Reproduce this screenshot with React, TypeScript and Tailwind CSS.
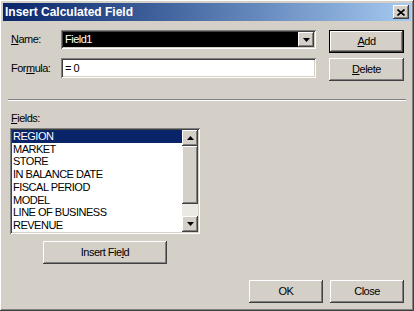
import React from "react";

const raised =
  "shadow-[inset_-1px_-1px_#404040,inset_1px_1px_#ffffff,inset_-2px_-2px_#808080,inset_2px_2px_#d4d0c8]";
const sunken =
  "shadow-[inset_1px_1px_#808080,inset_-1px_-1px_#ffffff,inset_2px_2px_#404040,inset_-2px_-2px_#d4d0c8]";

function Btn({
  children,
  w,
  def = false,
}: {
  children: React.ReactNode;
  w: string;
  def?: boolean;
}) {
  if (def) {
    return (
      <div className={`${w} h-[23px] border border-black bg-[#d4d0c8] flex`}>
        <div className={`flex-1 flex items-center justify-center ${raised}`}>
          {children}
        </div>
      </div>
    );
  }
  return (
    <div className={`${w} h-[23px] bg-[#d4d0c8] flex items-center justify-center ${raised}`}>
      {children}
    </div>
  );
}

function Arrow({ up }: { up?: boolean }) {
  return (
    <svg width="7" height="4" viewBox="0 0 7 4">
      {up ? (
        <polygon points="3.5,0 7,4 0,4" fill="#000" />
      ) : (
        <polygon points="0,0 7,0 3.5,4" fill="#000" />
      )}
    </svg>
  );
}

const fields = [
  "REGION",
  "MARKET",
  "STORE",
  "IN BALANCE DATE",
  "FISCAL PERIOD",
  "MODEL",
  "LINE OF BUSINESS",
  "REVENUE",
];

export default function App() {
  return (
    <div
      className="w-[414px] h-[311px] bg-[#d4d0c8] p-[3px] flex flex-col text-[11px] tracking-[-0.5px] text-black shadow-[inset_-1px_-1px_#404040,inset_1px_1px_#ffffff,inset_-2px_-2px_#808080]"
      style={{ fontFamily: '"Liberation Sans", Arial, sans-serif' }}
    >
      {/* Title bar */}
      <div className="h-[18px] flex items-center justify-between bg-gradient-to-r from-[#0a246a] to-[#a6caf0] pl-[2px] pr-[2px]">
        <span className="text-white font-bold text-[12px] tracking-normal leading-none">
          Insert Calculated Field
        </span>
        <div className={`w-[16px] h-[14px] bg-[#d4d0c8] flex items-center justify-center ${raised}`}>
          <svg width="8" height="7" viewBox="0 0 8 7">
            <path d="M0.5 0.5 L7.5 6.5 M7.5 0.5 L0.5 6.5" stroke="#000" strokeWidth="1.6" />
          </svg>
        </div>
      </div>

      {/* Name row */}
      <div className="mt-[9px] pl-[8px] pr-[7px] flex items-start">
        <div className="w-[50px] h-[19px] flex items-center">
          <span>
            <u>N</u>ame:
          </span>
        </div>
        <div className={`w-[255px] h-[19px] bg-white p-[2px] flex ${sunken}`}>
          <div className="flex-1 bg-black text-white flex items-center pl-[2px]">Field1</div>
          <div className={`w-[16px] h-[15px] bg-[#d4d0c8] flex items-center justify-center ${raised}`}>
            <Arrow />
          </div>
        </div>
        <div className="ml-auto">
          <Btn w="w-[75px]" def>
            <span>
              <u>A</u>dd
            </span>
          </Btn>
        </div>
      </div>

      {/* Formula row */}
      <div className="mt-[5px] pl-[8px] pr-[7px] flex items-start">
        <div className="w-[50px] h-[20px] flex items-center">
          <span>
            For<u>m</u>ula:
          </span>
        </div>
        <div className={`w-[255px] h-[20px] bg-white flex items-center pl-[4px] ${sunken}`}>
          = 0
        </div>
        <div className="ml-auto">
          <Btn w="w-[75px]">
            <span>
              <u>D</u>elete
            </span>
          </Btn>
        </div>
      </div>

      {/* Separator */}
      <div className="mt-[18px] ml-[5px] w-[398px] h-[2px] border-t border-t-[#808080] border-b border-b-white" />

      {/* Fields */}
      <div className="mt-[11px] pl-[8px] h-[13px] flex items-center">
        <span>
          <u>F</u>ields:
        </span>
      </div>
      <div className={`mt-[3px] ml-[7px] w-[190px] h-[106px] bg-white p-[2px] flex ${sunken}`}>
        <div className="flex-1 flex flex-col">
          {fields.map((f, i) => (
            <div
              key={f}
              className={`h-[13px] flex items-center pl-[1px] leading-none ${
                i === 0 ? "bg-[#0a246a] text-white" : ""
              }`}
            >
              {f}
            </div>
          ))}
        </div>
        <div className="w-[16px] flex flex-col bg-[#ebe9e4]">
          <div className={`h-[16px] bg-[#d4d0c8] flex items-center justify-center ${raised}`}>
            <Arrow up />
          </div>
          <div className={`h-[58px] bg-[#d4d0c8] ${raised}`} />
          <div className="flex-1" />
          <div className={`h-[16px] bg-[#d4d0c8] flex items-center justify-center ${raised}`}>
            <Arrow />
          </div>
        </div>
      </div>

      {/* Insert Field */}
      <div className="mt-[7px] ml-[40px]">
        <Btn w="w-[124px]">
          <span>
            Insert Fie<u>l</u>d
          </span>
        </Btn>
      </div>

      {/* OK / Close */}
      <div className="mt-[16px] pr-[7px] flex justify-end gap-[7px]">
        <Btn w="w-[74px]">OK</Btn>
        <Btn w="w-[74px]">Close</Btn>
      </div>
    </div>
  );
}
